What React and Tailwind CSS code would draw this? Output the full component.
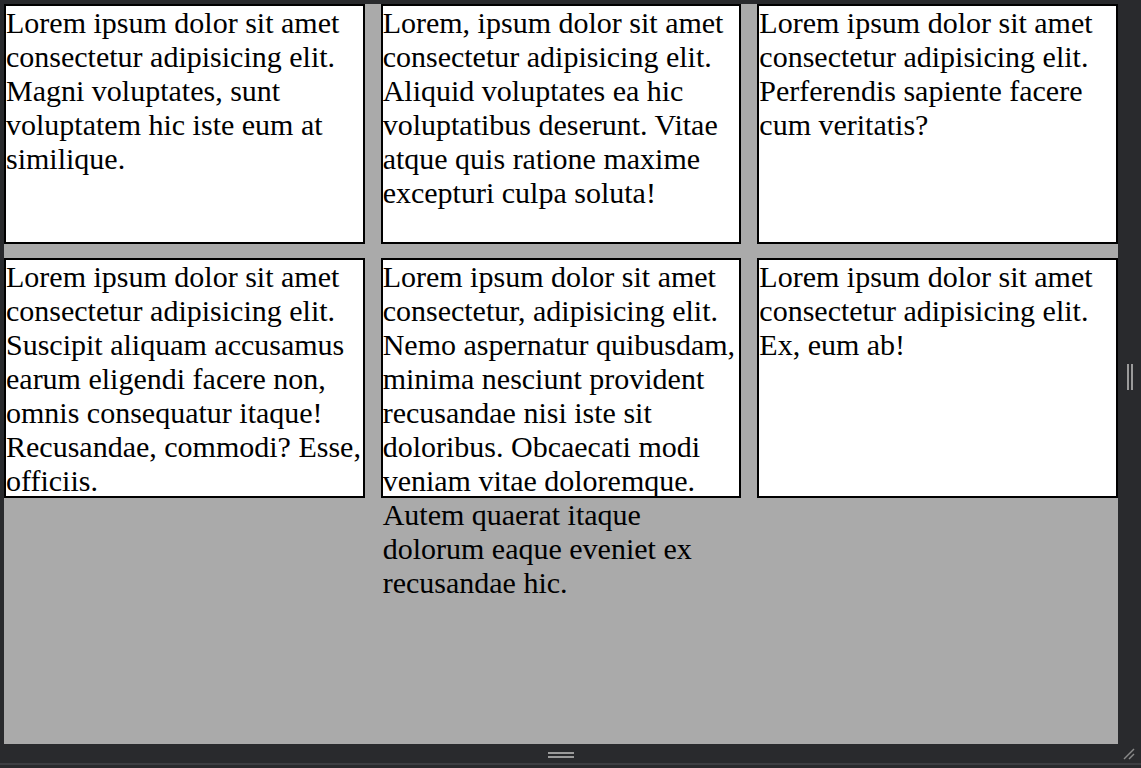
import React from 'react';

const boxes = [
  'Lorem ipsum dolor sit amet consectetur adipisicing elit. Magni voluptates, sunt voluptatem hic iste eum at similique.',
  'Lorem, ipsum dolor sit amet consectetur adipisicing elit. Aliquid voluptates ea hic voluptatibus deserunt. Vitae atque quis ratione maxime excepturi culpa soluta!',
  'Lorem ipsum dolor sit amet consectetur adipisicing elit. Perferendis sapiente facere cum veritatis?',
  'Lorem ipsum dolor sit amet consectetur adipisicing elit. Suscipit aliquam accusamus earum eligendi facere non, omnis consequatur itaque! Recusandae, commodi? Esse, officiis.',
  'Lorem ipsum dolor sit amet consectetur, adipisicing elit. Nemo aspernatur quibusdam, minima nesciunt provident recusandae nisi iste sit doloribus. Obcaecati modi veniam vitae doloremque. Autem quaerat itaque dolorum eaque eveniet ex recusandae hic.',
  'Lorem ipsum dolor sit amet consectetur adipisicing elit. Ex, eum ab!',
];

const App = () => {
  return (
    <div className="w-[1141px] h-[768px] bg-[#292a2d] flex flex-col overflow-hidden">
      <div className="flex pl-1 pt-1 h-[744px]">
        <div className="w-[1114px] h-[740px] bg-[#aaaaaa]">
          <div className="grid grid-cols-3 grid-rows-[240px_240px] gap-x-4 gap-y-[14px]">
            {boxes.map((text, i) => (
              <div
                key={i}
                className="bg-white border-2 border-black text-black text-[30px] leading-[normal] font-['Liberation_Serif',serif]"
              >
                {text}
              </div>
            ))}
          </div>
        </div>
        <div className="flex-1 flex items-center justify-center">
          <div className="flex gap-[2px] h-[26px] mt-[6px]">
            <span className="w-[2px] h-full bg-[#9b9b9b]"></span>
            <span className="w-[2px] h-full bg-[#9b9b9b]"></span>
          </div>
        </div>
      </div>
      <div className="h-[19px] relative flex items-center justify-center">
        <div className="flex flex-col gap-[2px] ml-[-20px] mt-[3px]">
          <span className="w-[26px] h-[2px] bg-[#9b9b9b]"></span>
          <span className="w-[26px] h-[2px] bg-[#9b9b9b]"></span>
        </div>
        <svg className="absolute right-[5px] top-[3px]" width="14" height="14" viewBox="0 0 14 14">
          <line x1="2" y1="12" x2="12" y2="2" stroke="#8a8a8a" strokeWidth="1.5" />
          <line x1="7" y1="12" x2="12" y2="7" stroke="#8a8a8a" strokeWidth="1.5" />
        </svg>
      </div>
      <div className="h-[2px] bg-[#3d3e42]"></div>
      <div className="flex-1"></div>
    </div>
  );
};

export default App;
